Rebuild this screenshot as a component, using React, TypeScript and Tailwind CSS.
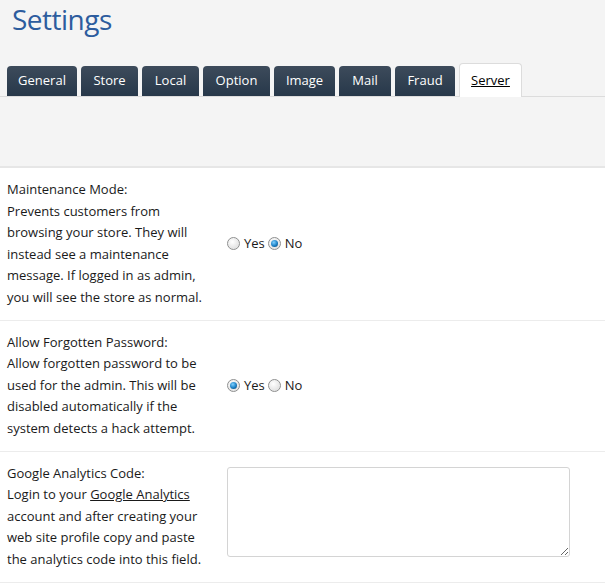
import React from "react";

const tabs = [
  { label: "General", w: "w-[70px]" },
  { label: "Store", w: "w-[57px]" },
  { label: "Local", w: "w-[57px]" },
  { label: "Option", w: "w-[67px]" },
  { label: "Image", w: "w-[61px]" },
  { label: "Mail", w: "w-[52px]" },
  { label: "Fraud", w: "w-[60px]" },
];

function Radio({ checked }: { checked?: boolean }) {
  return (
    <span className="inline-flex h-[13px] w-[13px] items-center justify-center rounded-full border border-[#8e8f8f] bg-[radial-gradient(circle_at_40%_35%,#ffffff,#d6d6d6)] shadow-[inset_0_0_1px_#fff]">
      {checked && (
        <span className="block h-[7px] w-[7px] rounded-full bg-[radial-gradient(circle_at_40%_35%,#7fd0ff,#1a7fc4_55%,#0b3d66)]" />
      )}
    </span>
  );
}

function YesNo({ yes }: { yes: boolean }) {
  return (
    <div className="flex items-center text-[13px] text-[#1a1a1a]">
      <Radio checked={yes} />
      <span className="ml-[4px] mr-[3px]">Yes</span>
      <Radio checked={!yes} />
      <span className="ml-[4px]">No</span>
    </div>
  );
}

export default function App() {
  return (
    <div
      className="w-[605px] h-[584px] overflow-hidden bg-white text-[#1a1a1a]"
      style={{ fontFamily: '"Open Sans", "DejaVu Sans", sans-serif' }}
    >
      <div className="bg-[#f4f4f4]">
        <h1 className="pl-[12px] pt-[1px] h-[63px] text-[28px] font-medium leading-[36px] text-[#2c5c9e] tracking-[-0.5px]">
          Settings
        </h1>
        <div className="flex items-end gap-[4px] pl-[7px] border-b border-[#dcdcdc] h-[34px]">
          {tabs.map((t) => (
            <div
              key={t.label}
              className={`${t.w} h-[30px] rounded-t-[4px] bg-gradient-to-b from-[#3d4b5b] to-[#27384a] text-white text-[13px] flex items-center justify-center`}
            >
              {t.label}
            </div>
          ))}
          <div className="w-[63px] h-[34px] -mb-px rounded-t-[4px] border border-b-0 border-[#dcdcdc] bg-white text-[13px] flex items-center justify-center">
            <span className="underline text-[#000]">Server</span>
          </div>
        </div>
        <div className="h-[71px] border-b-2 border-[#e6e6e6]" />
      </div>

      <div className="flex border-b border-[#ececec]">
        <div className="w-[227px] pl-[7px] pr-[22px] py-[11px] text-[13px] leading-[21.6px]">
          Maintenance Mode:
          <br />
          Prevents customers from browsing your store. They will instead see a maintenance message. If logged in as admin, you will see the store as normal.
        </div>
        <div className="flex items-center">
          <YesNo yes={false} />
        </div>
      </div>

      <div className="flex border-b border-[#ececec]">
        <div className="w-[227px] pl-[7px] pr-[22px] py-[11px] text-[13px] leading-[21.6px]">
          Allow Forgotten Password:
          <br />
          Allow forgotten password to be used for the admin. This will be disabled automatically if the system detects a hack attempt.
        </div>
        <div className="flex items-center">
          <YesNo yes={true} />
        </div>
      </div>

      <div className="flex border-b border-[#ececec]">
        <div className="w-[227px] pl-[7px] pr-[22px] py-[11px] text-[13px] leading-[21.6px]">
          Google Analytics Code:
          <br />
          Login to your <span className="underline">Google Analytics</span> account and after creating your web site profile copy and paste the analytics code into this field.
        </div>
        <div className="pt-[15px]">
          <textarea className="block w-[343px] h-[90px] rounded-[3px] border border-[#d4d4d4] bg-white outline-none" />
        </div>
      </div>
    </div>
  );
}
